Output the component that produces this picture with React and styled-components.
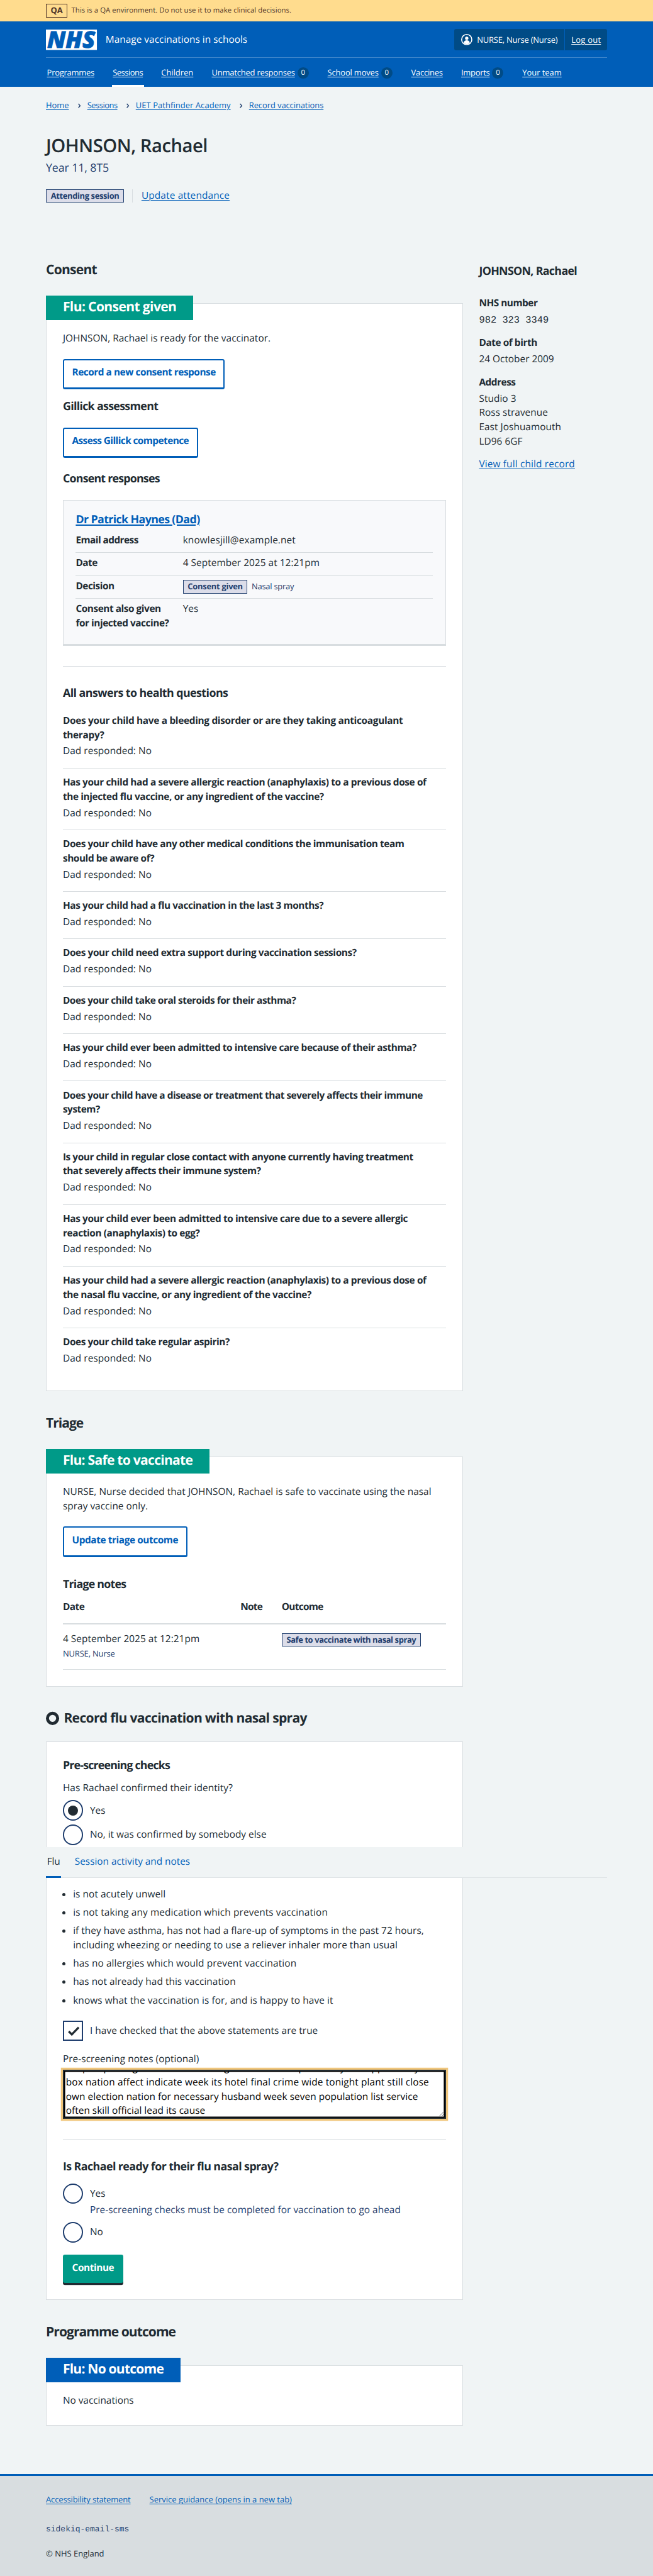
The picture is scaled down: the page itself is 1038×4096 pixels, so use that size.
import React from "react";
import styled, { createGlobalStyle, css } from "styled-components";

const ink = "#212b32";
const blue = "#005eb8";
const navy = "#1f3e6e";
const teal = "#009a88";
const line = "#d8dde0";
const mono = '"Liberation Mono", monospace';

const GlobalStyle = createGlobalStyle`
  html { background: #f0f4f5; }
  body {
    margin: 0;
    background: #f0f4f5;
  }
  #root {
    zoom: 0.8109;
    color: ${ink};
    font-family: "Open Sans", "Noto Sans", sans-serif;
    font-size: 19px;
    line-height: 28px;
    text-rendering: geometricPrecision;
  }
  *, *::before, *::after { box-sizing: border-box; }
  h1, h2, h3, h4, p, ul, dl, dd, dt { margin: 0; padding: 0; }
`;

const tracked = css`
  letter-spacing: ${(p) => p.$ls ?? 0}px;
`;
const bold = css`
  font-weight: 700;
  letter-spacing: calc(${(p) => p.$ls ?? 0}px - 0.018em);
`;

const Container = styled.div`
  width: 1100px;
  margin: 0 auto;
`;

/* Environment banner */
const Banner = styled.div`
  background: #ffdc8e;
  color: #4d3329;
`;
const BannerRow = styled(Container)`
  height: 42px;
  display: flex;
  align-items: center;
  gap: 8px;
  font-size: 14px;
  line-height: 20px;
  letter-spacing: 0.09px;
`;
const EnvTag = styled.strong`
  width: 42px;
  height: 26px;
  border: 1px solid currentColor;
  font-size: 16px;
  ${bold}
  line-height: 24px;
  text-align: center;
`;

/* Header */
const Header = styled.header`
  background: ${blue};
  color: #fff;
  height: 128px;
`;
const Masthead = styled.div`
  height: 72px;
  padding-top: 1px;
  display: flex;
  align-items: center;
  border-bottom: 1px solid rgba(255, 255, 255, 0.25);
`;
const ServiceName = styled.span`
  margin-left: 17px;
  flex: 1;
  letter-spacing: 0.02px;
`;
const Account = styled.div`
  width: 300px;
  height: 42px;
  display: flex;
  align-items: stretch;
  border-radius: 4px;
  background: #004b86;
  font-size: 16px;
  line-height: 42px;
`;
const AccountUser = styled.span`
  width: 217px;
  padding-left: 14px;
  display: flex;
  align-items: center;
  gap: 9px;
  border-right: 1px solid ${blue};
  letter-spacing: -0.25px;
`;
const Link = styled.a`
  color: ${(p) => p.$color || blue};
  text-decoration: underline;
  text-decoration-thickness: 1px;
  text-underline-offset: 2px;
  white-space: nowrap;
  ${tracked}
`;
const LogOut = styled(Link)`
  margin-left: 13px;
`;
const Nav = styled.nav`
  height: 56px;
  display: flex;
  gap: 32px;
  font-size: 16px;
  line-height: 24px;
`;
const NavItem = styled.div`
  display: flex;
  align-items: center;
  padding: ${(p) => (p.$active ? "5px 2px 0" : "1.3px 2px 0")};
  border-bottom: ${(p) => (p.$active ? "4px solid #fff" : "0")};
`;
const Count = styled.span`
  width: 22px;
  height: 22px;
  margin: 0 1px 0 5px;
  border-radius: 50%;
  background: #004b86;
  font-size: 14px;
  line-height: 22px;
  text-align: center;
`;

/* Page heading */
const Breadcrumb = styled.nav`
  padding-top: 24.7px;
  display: flex;
  font-size: 16px;
  line-height: 24px;
`;
const PageTitle = styled.h1`
  margin-top: 45px;
  font-size: 36px;
  font-weight: 600;
  line-height: 44px;
  letter-spacing: -0.57px;
`;
const Caption = styled.p`
  margin-top: 6.5px;
  color: ${navy};
  font-size: 22px;
  line-height: 32px;
  letter-spacing: -0.15px;
`;
const StatusRow = styled.div`
  margin-top: 24.9px;
  height: 26px;
  display: flex;
`;
const StatusLink = styled.div`
  margin-left: 16px;
  padding-left: 17px;
  border-left: 1px solid ${line};
  line-height: 24px;
`;
const Tag = styled.strong`
  display: inline-block;
  justify-self: start;
  height: 26px;
  margin-top: ${(p) => p.$top ?? 0}px;
  padding: 0 8.2px;
  border: 1px solid ${navy};
  background: #dcdde9;
  color: ${navy};
  font-size: 16px;
  line-height: 23px;
  white-space: nowrap;
  ${bold}
`;

/* Columns */
const Columns = styled.div`
  margin-top: 116.4px;
  display: grid;
  grid-template-columns: 817px 251px;
  gap: 32px;
  align-items: start;
`;
const SectionTitle = styled.h2`
  display: flex;
  align-items: center;
  gap: 9px;
  margin-top: ${(p) => p.$top ?? 47.3}px;
  font-size: 26px;
  line-height: 32px;
  ${bold}
`;
const Card = styled.section`
  margin: ${(p) => p.$top ?? 49.2}px 0 -0.4px;
  padding: 0 32px ${(p) => p.$bottom ?? 31.7}px;
  border: 1px solid ${line};
  background: #fff;
`;
const CardLabel = styled.h3`
  width: fit-content;
  height: 48px;
  margin: -16px 0 22.6px -33px;
  padding: 0 33px;
  background: ${(p) => p.$bg || teal};
  color: #fff;
  font-size: 26px;
  line-height: 44.5px;
  ${bold}
`;
const Text = styled.p`
  margin-top: ${(p) => p.$top ?? 0}px;
  color: ${(p) => p.$color || "inherit"};
  white-space: pre-line;
  ${tracked}
`;
const SubTitle = styled.h4`
  margin-top: ${(p) => p.$top ?? 0}px;
  font-size: 22px;
  line-height: 32px;
  ${bold}
`;
const Button = styled.button`
  display: block;
  height: 60px;
  margin: ${(p) => p.$top ?? 25}px 0 0;
  padding: 0 15.5px 5px;
  border: 2.5px solid ${blue};
  border-bottom-width: 4px;
  border-radius: 4px;
  background: #fff;
  color: ${blue};
  font-family: inherit;
  font-size: 19px;
  line-height: 28px;
  text-rendering: inherit;
  ${bold}
`;
const PrimaryButton = styled(Button)`
  height: 56px;
  margin-bottom: 4px;
  padding: 0 18px 3px;
  border: 0;
  background: ${teal};
  color: #fff;
  box-shadow: 0 4px 0 ${ink};
`;
const Rule = styled.hr`
  height: 1px;
  margin: ${(p) => p.$top}px 0 0;
  border: 0;
  background: ${line};
`;

/* Consent response summary */
const Response = styled.div`
  margin-top: 23.8px;
  padding: 22.2px 24px 16.3px;
  border: 1px solid ${line};
  border-bottom-width: 4px;
  background: #f8f9fb;
`;
const ResponseTitle = styled(SubTitle)`
  margin-bottom: 3.7px;
`;
const ResponseLink = styled(Link)`
  text-decoration-thickness: 2px;
  letter-spacing: inherit;
`;
const SummaryRow = styled.div`
  display: grid;
  grid-template-columns: 210px 1fr;
  margin-bottom: -0.23px;
  padding: 6.4px 0 9.6px;
  border-bottom: 1px solid ${line};
  &:last-child { border-bottom: 0; }
`;
const SummaryKey = styled.dt`
  white-space: pre-line;
  ${bold}
`;
const SummaryValue = styled.dd`
  height: 28px;
  display: flex;
  align-items: center;
  gap: 8px;
  ${tracked}
`;
const Small = styled.span`
  display: block;
  margin-top: ${(p) => p.$top ?? 0}px;
  color: ${navy};
  font-size: 16px;
  line-height: 24px;
  ${tracked}
`;

/* Health answers */
const Answers = styled.dl`
  margin-top: 9px;
`;
const Answer = styled.div`
  margin-bottom: -0.23px;
  padding: 14.1px 0 17.9px;
  border-bottom: 1px solid ${line};
  &:last-child { border-bottom: 0; }
`;
const Question = styled.dt`
  margin-bottom: 4px;
  white-space: pre-line;
  ${bold}
`;
const Reply = styled.dd`
  letter-spacing: 0.09px;
`;

/* Triage notes */
const NotesRow = styled.div`
  display: grid;
  grid-template-columns: 348px 81px 1fr;
  align-items: start;
  padding: ${(p) => (p.$head ? "14.1px 0 17px" : "15px 0 17.8px")};
  border-bottom: ${(p) => (p.$head ? 2.5 : 1)}px solid ${line};
`;
const HeadCell = styled.div`
  ${bold}
`;
const Cell = styled.div`
  ${tracked}
`;

/* Form controls */
const Choice = styled.label`
  display: flex;
  align-items: center;
  gap: 13px;
  height: 40px;
  margin-top: ${(p) => p.$top ?? 8}px;
  line-height: 30px;
  ${tracked}
`;
const Radio = styled.span`
  width: 40px;
  height: 40px;
  display: grid;
  place-items: center;
  border: 2.5px solid ${navy};
  border-radius: 50%;
  &::after {
    content: "";
    width: 20px;
    height: 20px;
    border-radius: 50%;
    background: ${(p) => (p.$on ? ink : "transparent")};
  }
`;
const Checkbox = styled.span`
  width: 40px;
  height: 40px;
  border: 2.5px solid ${navy};
  svg { display: block; }
`;
const Hint = styled(Text)`
  margin-left: 53px;
`;
const Tabs = styled.nav`
  position: relative;
  width: 1100px;
  height: 60px;
  margin: 4px 0 18.9px -33px;
  display: flex;
  gap: 25px;
  background: #f0f4f5;
  box-shadow: inset 0 -1px 0 ${line};
`;
const Tab = styled.span`
  padding: 14.6px 2px 0;
  border-bottom: ${(p) => (p.$active ? `4px solid ${blue}` : "0")};
  color: ${(p) => (p.$active ? ink : blue)};
  ${tracked}
`;
const Statements = styled.ul`
  padding-left: 20px;
  li + li { margin-top: 8px; }
`;
const Statement = styled.li`
  white-space: pre-line;
  ${tracked}
`;
const NotesField = styled.div`
  position: relative;
  height: 96px;
  margin-top: 5.7px;
  padding-left: 3.5px;
  overflow: hidden;
  border: 2.5px solid ${ink};
  background: #fff;
  box-shadow: 0 0 0 4px #f0c67c, inset 0 0 0 2px #000;
  color: #000;
`;
const NotesText = styled.div`
  margin-top: -19px;
`;
const NotesLine = styled.div`
  white-space: nowrap;
  ${tracked}
`;
const Grip = styled.svg`
  position: absolute;
  right: 2px;
  bottom: 2px;
`;

/* Child details */
const Details = styled.aside`
  padding-top: 3.9px;
`;
const DetailList = styled.dl`
  padding-top: 14px;
`;
const DetailTerm = styled.dt`
  padding: 17px 0 4px;
  ${bold}
`;
const DetailValue = styled.dd`
  white-space: pre-line;
  ${tracked}
`;
const NhsNumber = styled.dd`
  padding-top: 1.6px;
  font-family: ${mono};
`;
const DetailLink = styled.p`
  margin-top: 17px;
`;

/* Footer */
const Footer = styled.footer`
  margin-top: 95.2px;
  height: 200px;
  padding-top: 35.2px;
  border-top: 4px solid ${blue};
  background: ${line};
  font-size: 16px;
  line-height: 24px;
`;
const FooterLinks = styled.div`
  display: flex;
  gap: 37px;
`;
const Build = styled.p`
  margin-top: 33.9px;
  color: ${navy};
  font-family: ${mono};
`;
const Copyright = styled.p`
  margin-top: 24px;
`;
const Logo = styled.svg`
  overflow: visible;
`;
const LogoText = styled.text`
  font: italic 800 45px "Open Sans", sans-serif;
  fill: ${blue};
  stroke: ${blue};
  stroke-width: 1;
`;

const NhsLogo = () => (
  <Logo width="100" height="40" viewBox="0 0 100 40">
    <rect width="100" height="40" fill="#fff" />
    <LogoText x="2.5" y="36" textLength="94" lengthAdjust="spacingAndGlyphs">NHS</LogoText>
  </Logo>
);

const UserIcon = () => (
  <svg width="22" height="22" viewBox="0 0 22 22">
    <circle cx="11" cy="11" r="10" fill="none" stroke="#fff" strokeWidth="2" />
    <circle cx="11" cy="8.4" r="3.3" fill="#fff" />
    <path d="M5.4 17.8v-1.6c0-2.4 2.4-4 5.6-4s5.6 1.6 5.6 4v1.6A9 9 0 0 1 11 20a9 9 0 0 1-5.6-2.2z" fill="#fff" />
  </svg>
);

const Chevron = () => (
  <svg width="36" height="24" viewBox="0 0 36 24">
    <path d="M18 8.6l3.5 3.9-3.5 3.9" fill="none" stroke={navy} strokeWidth="1.7" />
  </svg>
);

const TickIcon = () => (
  <svg width="36" height="36" viewBox="0 0 36 36">
    <path d="M9 18.5l6 6 13.5-14" fill="none" stroke={ink} strokeWidth="4" />
  </svg>
);

const RingIcon = () => (
  <svg width="26" height="26" viewBox="0 0 26 26" overflow="visible">
    <circle cx="13" cy="14" r="10" fill="none" stroke={ink} strokeWidth="6" />
  </svg>
);

const navItems = [
  { label: "Programmes", ls: -0.31 },
  { label: "Sessions", ls: -0.63, active: true },
  { label: "Children", ls: -0.01 },
  { label: "Unmatched responses", ls: -0.25, count: 0 },
  { label: "School moves", ls: -0.22, count: 0 },
  { label: "Vaccines", ls: -0.27 },
  { label: "Imports", ls: -0.36, count: 0 },
  { label: "Your team", ls: -0.05 },
];

const crumbs = [
  ["Home", -0.05],
  ["Sessions", -0.63],
  ["UET Pathfinder Academy", 0.07],
  ["Record vaccinations", -0.12],
];

const questions = [
  ["Does your child have a bleeding disorder or are they taking anticoagulant\ntherapy?", -0.05],
  ["Has your child had a severe allergic reaction (anaphylaxis) to a previous dose of\nthe injected flu vaccine, or any ingredient of the vaccine?", -0.14],
  ["Does your child have any other medical conditions the immunisation team\nshould be aware of?", -0.19],
  ["Has your child had a flu vaccination in the last 3 months?", -0.16],
  ["Does your child need extra support during vaccination sessions?", -0.16],
  ["Does your child take oral steroids for their asthma?", -0.24],
  ["Has your child ever been admitted to intensive care because of their asthma?", -0.18],
  ["Does your child have a disease or treatment that severely affects their immune\nsystem?", -0.25],
  ["Is your child in regular close contact with anyone currently having treatment\nthat severely affects their immune system?", -0.21],
  ["Has your child ever been admitted to intensive care due to a severe allergic\nreaction (anaphylaxis) to egg?", -0.14],
  ["Has your child had a severe allergic reaction (anaphylaxis) to a previous dose of\nthe nasal flu vaccine, or any ingredient of the vaccine?", -0.14],
  ["Does your child take regular aspirin?", -0.2],
];

const statements = [
  ["is not acutely unwell", 0.08],
  ["is not taking any medication which prevents vaccination", 0.13],
  ["if they have asthma, has not had a flare-up of symptoms in the past 72 hours,\nincluding wheezing or needing to use a reliever inhaler more than usual", 0.05],
  ["has no allergies which would prevent vaccination", 0.13],
  ["has not already had this vaccination", 0.05],
  ["knows what the vaccination is for, and is happy to have it", 0.13],
];

const noteLines = [
  ["couple special guess ball feel it song debate see responsibility but opportunity else", 0.06],
  ["box nation affect indicate week its hotel final crime wide tonight plant still close", 0.15],
  ["own election nation for necessary husband week seven population list service", 0.06],
  ["often skill official lead its cause", 0.02],
];

export default function App() {
  return (
    <>
      <GlobalStyle />
      <Banner>
        <BannerRow>
          <EnvTag>QA</EnvTag>
          <span>This is a QA environment. Do not use it to make clinical decisions.</span>
        </BannerRow>
      </Banner>

      <Header>
        <Container>
          <Masthead>
            <NhsLogo />
            <ServiceName>Manage vaccinations in schools</ServiceName>
            <Account>
              <AccountUser>
                <UserIcon />
                NURSE, Nurse (Nurse)
              </AccountUser>
              <LogOut $color="#fff" $ls={0.3}>Log out</LogOut>
            </Account>
          </Masthead>
          <Nav>
            {navItems.map((item) => (
              <NavItem key={item.label} $active={item.active}>
                <Link $color="#fff" $ls={item.ls}>{item.label}</Link>
                {item.count !== undefined && <Count>{item.count}</Count>}
              </NavItem>
            ))}
          </Nav>
        </Container>
      </Header>

      <Container>
        <Breadcrumb>
          {crumbs.map(([label, ls], i) => (
            <React.Fragment key={label}>
              {i > 0 && <Chevron />}
              <Link $ls={ls}>{label}</Link>
            </React.Fragment>
          ))}
        </Breadcrumb>
        <PageTitle>JOHNSON, Rachael</PageTitle>
        <Caption>Year 11, 8T5</Caption>
        <StatusRow>
          <Tag $ls={-0.18}>Attending session</Tag>
          <StatusLink>
            <Link $ls={0.18}>Update attendance</Link>
          </StatusLink>
        </StatusRow>

        <Columns>
          <main>
            <SectionTitle $top={0} $ls={-0.47}>Consent</SectionTitle>
            <Card $bottom={31.2}>
              <CardLabel $ls={-0.31}>Flu: Consent given</CardLabel>
              <Text $ls={0.03}>JOHNSON, Rachael is ready for the vaccinator.</Text>
              <Button $ls={-0.24} $top={25.4}>Record a new consent response</Button>
              <SubTitle $top={18.2} $ls={-0.46}>Gillick assessment</SubTitle>
              <Button $ls={-0.37} $top={24.1}>Assess Gillick competence</Button>
              <SubTitle $top={26.2} $ls={-0.59}>Consent responses</SubTitle>
              <Response>
                <ResponseTitle $ls={-0.38}>
                  <ResponseLink>Dr Patrick Haynes (Dad)</ResponseLink>
                </ResponseTitle>
                <dl>
                  <SummaryRow>
                    <SummaryKey $ls={-0.34}>Email address</SummaryKey>
                    <SummaryValue $ls={0.12}>knowlesjill@example.net</SummaryValue>
                  </SummaryRow>
                  <SummaryRow>
                    <SummaryKey $ls={-0.3}>Date</SummaryKey>
                    <SummaryValue $ls={0.05}>4 September 2025 at 12:21pm</SummaryValue>
                  </SummaryRow>
                  <SummaryRow>
                    <SummaryKey $ls={-0.25}>Decision</SummaryKey>
                    <SummaryValue>
                      <Tag $top={2} $ls={-0.07}>Consent given</Tag>
                      <Small $top={2} $ls={-0.32}>Nasal spray</Small>
                    </SummaryValue>
                  </SummaryRow>
                  <SummaryRow>
                    <SummaryKey $ls={-0.22}>{"Consent also given\nfor injected vaccine?"}</SummaryKey>
                    <SummaryValue>Yes</SummaryValue>
                  </SummaryRow>
                </dl>
              </Response>
              <Rule $top={39.9} />
              <SubTitle $top={37.5} $ls={-0.29}>All answers to health questions</SubTitle>
              <Answers>
                {questions.map(([q, ls]) => (
                  <Answer key={q}>
                    <Question $ls={ls}>{q}</Question>
                    <Reply>Dad responded: No</Reply>
                  </Answer>
                ))}
              </Answers>
            </Card>

            <SectionTitle $ls={-0.77}>Triage</SectionTitle>
            <Card>
              <CardLabel $ls={-0.44}>Flu: Safe to vaccinate</CardLabel>
              <Text $ls={0.03}>{"NURSE, Nurse decided that JOHNSON, Rachael is safe to vaccinate using the nasal\nspray vaccine only."}</Text>
              <Button $ls={-0.18}>Update triage outcome</Button>
              <SubTitle $top={38.5} $ls={-0.57}>Triage notes</SubTitle>
              <NotesRow $head>
                <HeadCell $ls={-0.3}>Date</HeadCell>
                <HeadCell $ls={-0.47}>Note</HeadCell>
                <HeadCell $ls={-0.51}>Outcome</HeadCell>
              </NotesRow>
              <NotesRow>
                <Cell $ls={0.05}>
                  4 September 2025 at 12:21pm
                  <Small $top={2.8} $ls={-0.21}>NURSE, Nurse</Small>
                </Cell>
                <Cell />
                <Tag $top={2} $ls={-0.22}>Safe to vaccinate with nasal spray</Tag>
              </NotesRow>
            </Card>

            <SectionTitle $top={46.6} $ls={-0.36}>
              <RingIcon />
              Record flu vaccination with nasal spray
            </SectionTitle>
            <Card $top={29.7} $bottom={27.6}>
              <SubTitle $top={30.2} $ls={-0.64}>Pre-screening checks</SubTitle>
              <Text $top={14.1} $ls={0.09}>Has Rachael confirmed their identity?</Text>
              <Choice $top={9.7}>
                <Radio $on />
                Yes
              </Choice>
              <Choice>
                <Radio />
                No, it was confirmed by somebody else
              </Choice>
              <Tabs>
                <Tab $active $ls={-0.3}>Flu</Tab>
                <Tab $ls={-0.03}>Session activity and notes</Tab>
              </Tabs>
              <Statements>
                {statements.map(([s, ls]) => (
                  <Statement key={s} $ls={ls}>{s}</Statement>
                ))}
              </Statements>
              <Choice $top={25.4} $ls={0.07}>
                <Checkbox>
                  <TickIcon />
                </Checkbox>
                I have checked that the above statements are true
              </Choice>
              <Text $top={22.3} $ls={0.06}>Pre-screening notes (optional)</Text>
              <NotesField>
                <NotesText>
                  {noteLines.map(([t, ls]) => (
                    <NotesLine key={t} $ls={ls}>{t}</NotesLine>
                  ))}
                </NotesText>
                <Grip width="9" height="9" viewBox="0 0 9 9">
                  <path d="M0.5 8.500l8-8M5 8.500l3.500-3.500" stroke="#555" strokeWidth="1" />
                </Grip>
              </NotesField>
              <Rule $top={40.3} />
              <SubTitle $top={38.2} $ls={-0.31}>Is Rachael ready for their flu nasal spray?</SubTitle>
              <Choice $top={15.5}>
                <Radio />
                Yes
              </Choice>
              <Hint $top={-1.4} $ls={0.03} $color={navy}>
                Pre-screening checks must be completed for vaccination to go ahead
              </Hint>
              <Choice $top={9.4}>
                <Radio />
                No
              </Choice>
              <PrimaryButton $top={24} $ls={-0.19}>Continue</PrimaryButton>
            </Card>

            <SectionTitle $ls={-0.72}>Programme outcome</SectionTitle>
            <Card $bottom={33.4}>
              <CardLabel $bg={blue} $ls={-0.51}>Flu: No outcome</CardLabel>
              <Text $ls={-0.03}>No vaccinations</Text>
            </Card>
          </main>

          <Details>
            <SubTitle $ls={-0.45}>JOHNSON, Rachael</SubTitle>
            <DetailList>
              <DetailTerm $ls={-0.27}>NHS number</DetailTerm>
              <NhsNumber>982 323 3349</NhsNumber>
              <DetailTerm $ls={-0.2}>Date of birth</DetailTerm>
              <DetailValue>24 October 2009</DetailValue>
              <DetailTerm $ls={-0.26}>Address</DetailTerm>
              <DetailValue $ls={0.05}>{"Studio 3\nRoss stravenue\nEast Joshuamouth\nLD96 6GF"}</DetailValue>
            </DetailList>
            <DetailLink>
              <Link $ls={0.18}>View full child record</Link>
            </DetailLink>
          </Details>
        </Columns>
      </Container>

      <Footer>
        <Container>
          <FooterLinks>
            <Link $ls={-0.16}>Accessibility statement</Link>
            <Link>Service guidance (opens in a new tab)</Link>
          </FooterLinks>
          <Build>sidekiq-email-sms</Build>
          <Copyright>© NHS England</Copyright>
        </Container>
      </Footer>
    </>
  );
}
